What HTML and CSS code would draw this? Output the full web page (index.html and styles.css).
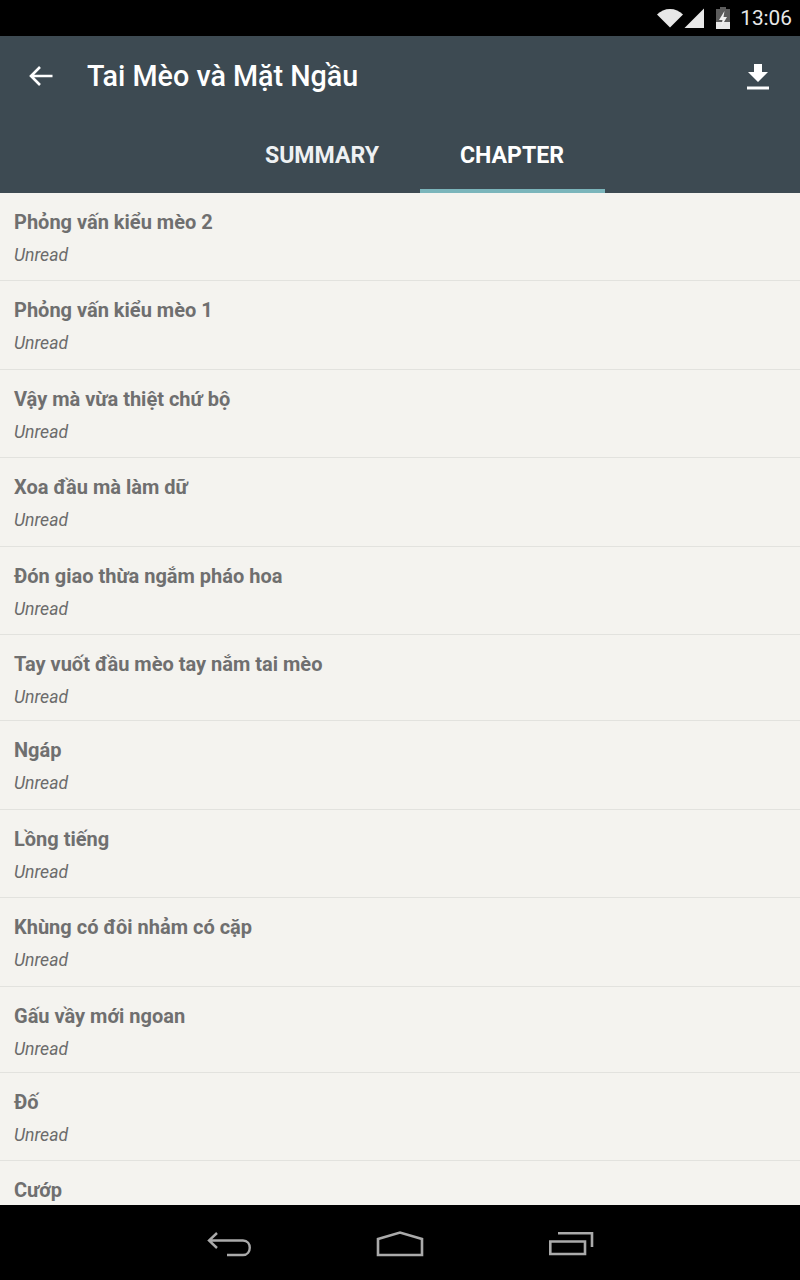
FILE: index.html
```html
<!DOCTYPE html>
<html lang="vi">
  <head>
    <meta charset="UTF-8">
    <meta name="viewport" content="width=device-width, initial-scale=1.0">
    <title>Tai Mèo và Mặt Ngầu</title>
    <link rel="stylesheet" href="styles.css">
  </head>
  <body>
    <!-- Status bar -->
    <div class="statusbar">
      <svg class="status-wifi" width="26" height="20" viewBox="0 0 26 20"><path d="M0 6.500C3.500 3 8 1 13 1S22.500 3 26 6.500L13 19.500Z" fill="#e8e8e8"/></svg>
      <svg class="status-signal" width="20" height="20" viewBox="0 0 20 20"><path d="M20 0.500V20H0.500Z" fill="#e8e8e8"/></svg>
      <svg class="status-battery" width="14" height="22" viewBox="0 0 14 22"><path d="M4 0H10V2H14V22H0V2H4Z" fill="#5c5c5c"/><path d="M0 15H14V22H0Z" fill="#e8e8e8"/><path d="M8.500 4L3 13H6.500L5 20L11 10H7.500Z" fill="#f2f2f2"/></svg>
      <span class="clock">13:06</span>
    </div>

    <!-- Toolbar and tabs -->
    <div class="appbar">
      <div class="toolbar">
        <svg class="back" width="26" height="24" viewBox="0 0 26 24"><path d="M24.500 12H3M12 3L3 12L12 21" fill="none" stroke="#fff" stroke-width="2.600"/></svg>
        <h1>Tai Mèo và Mặt Ngầu</h1>
        <svg class="download" width="22" height="26" viewBox="0 0 22 26"><path d="M7 0H15V8H21L11 18L1 8H7Z" fill="#fff"/><path d="M0 22.500H22V25.500H0Z" fill="#fff"/></svg>
      </div>
      <div class="tabs">
        <a class="tab" href="#">SUMMARY</a>
        <a class="tab active" href="#">CHAPTER</a>
      </div>
    </div>

    <!-- Chapter list -->
    <div class="chapters">
      <div class="chapter"><h3>Phỏng vấn kiểu mèo 2</h3><p>Unread</p></div>
      <div class="chapter"><h3>Phỏng vấn kiểu mèo 1</h3><p>Unread</p></div>
      <div class="chapter"><h3>Vậy mà vừa thiệt chứ bộ</h3><p>Unread</p></div>
      <div class="chapter"><h3>Xoa đầu mà làm dữ</h3><p>Unread</p></div>
      <div class="chapter"><h3>Đón giao thừa ngắm pháo hoa</h3><p>Unread</p></div>
      <div class="chapter short"><h3>Tay vuốt đầu mèo tay nắm tai mèo</h3><p>Unread</p></div>
      <div class="chapter"><h3>Ngáp</h3><p>Unread</p></div>
      <div class="chapter"><h3>Lồng tiếng</h3><p>Unread</p></div>
      <div class="chapter"><h3>Khùng có đôi nhảm có cặp</h3><p>Unread</p></div>
      <div class="chapter short"><h3>Gấu vầy mới ngoan</h3><p>Unread</p></div>
      <div class="chapter"><h3>Đố</h3><p>Unread</p></div>
      <div class="chapter"><h3>Cướp</h3></div>
    </div>

    <!-- Navigation bar -->
    <div class="navbar">
      <svg width="46" height="26" viewBox="0 0 46 26"><path d="M11 2L3 9.500L11 17M3 9.500H37C46 9.500 46 24 37 24H21" fill="none" stroke="#aaa" stroke-width="2.400"/></svg>
      <svg width="48" height="26" viewBox="0 0 48 26"><path d="M2 8L24 1.500L46 8V24H2Z" fill="none" stroke="#aaa" stroke-width="2.600"/></svg>
      <svg width="46" height="24" viewBox="0 0 46 24"><path d="M2.300 9.500H37V22H2.300Z" fill="none" stroke="#aaa" stroke-width="2.600"/><path d="M10 1.300H44V15" fill="none" stroke="#aaa" stroke-width="2.600"/></svg>
    </div>
  </body>
</html>
```

FILE: styles.css
```css
body {
  margin: 0;
  width: 800px;
  height: 1280px;
  overflow: hidden;
  display: flex;
  flex-direction: column;
  font-family: Roboto, sans-serif;
  background-color: #f4f3ef;
}
.statusbar {
  height: 36px;
  flex: none;
  background-color: #000;
  display: flex;
  align-items: center;
  justify-content: flex-end;
  padding-right: 8px;
  color: #e8e8e8;
}
.status-wifi {
  margin-right: 1px;
}
.status-signal {
  margin-right: 12px;
}
.status-battery {
  margin-right: 10px;
}
.clock {
  font-size: 20.8px;
}
.appbar {
  height: 157px;
  flex: none;
  background-color: #3d4a52;
  color: #fff;
}
.toolbar {
  height: 80px;
  display: flex;
  align-items: center;
  padding: 0 31px 0 28px;
}
.toolbar h1 {
  flex: 1;
  margin: 0 0 0 33px;
  font-size: 28.7px;
  font-weight: 500;
}
.download {
  margin-top: 2px;
}
.tabs {
  display: flex;
  justify-content: center;
  height: 77px;
  padding-left: 34px;
}
.tab {
  width: 185px;
  padding-top: 26px;
  box-sizing: border-box;
  text-align: center;
  text-decoration: none;
  color: #eef1f3;
  font-size: 23.1px;
  font-weight: 700;
}
.tab.active {
  color: #fff;
  border-bottom: 4px solid #7bb5bb;
  margin-left: 5px;
}
.chapters {
  flex: 1;
  min-height: 0;
  overflow: hidden;
}
.chapter {
  height: 88.4px;
  box-sizing: border-box;
  padding: 17px 14px 0;
  border-bottom: 1px solid #e2e2de;
}
.chapter.short {
  height: 86.4px;
}
.chapter h3 {
  margin: 0;
  font-size: 20px;
  line-height: 24px;
  font-weight: 700;
  color: #6f6f6f;
}
.chapter p {
  margin: 11px 0 0;
  font-size: 17.6px;
  line-height: 20px;
  font-style: italic;
  color: #6b6b6b;
}
.navbar {
  height: 75px;
  flex: none;
  background-color: #000;
  display: flex;
  align-items: center;
  justify-content: center;
  gap: 124px;
  padding-top: 2px;
  box-sizing: border-box;
}
```
